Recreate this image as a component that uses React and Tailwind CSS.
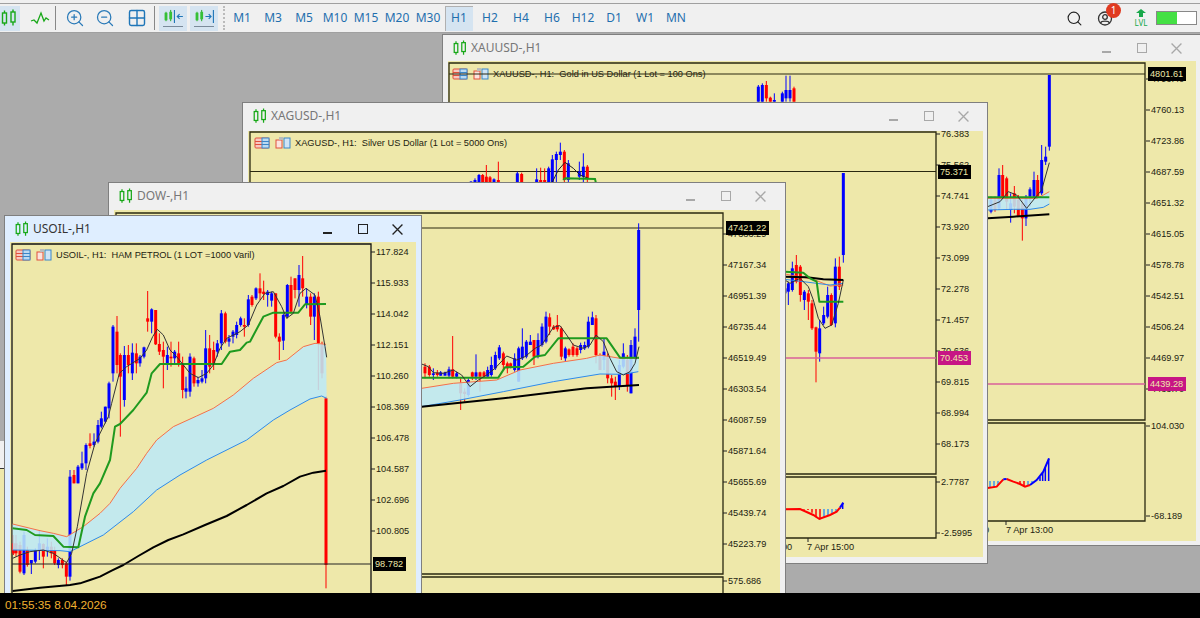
import { Search, ZoomIn, ZoomOut, Grid2x2 } from "lucide-react";

const BLUE = "#0000ff";
const RED = "#ff0000";

// candles are [x, colour, wickTop, bodyTop, bodyBottom, wickBottom], measured on a 3x crop
const usoilCandles = [
  [40,"r",975,1000,1030,1035],[48,"r",975,1000,1030,1040],[60,"r",995,1005,1085,1090],[72,"b",965,975,1090,1095],
  [82,"r",1010,1020,1065,1070],[94,"b",1050,1050,1060,1092],[106,"b",1015,1020,1055,1060],[118,"b",960,1000,1020,1050],
  [130,"r",1000,1002,1040,1075],[142,"b",985,1010,1020,1040],[154,"r",995,1010,1030,1045],[164,"r",1010,1020,1060,1065],
  [175,"b",1045,1050,1065,1075],[187,"r",1045,1050,1065,1075],[199,"r",1055,1060,1100,1125],[210,"b",780,800,1100,1112],
  [222,"r",780,795,820,820],[234,"b",765,770,820,820],[246,"b",725,760,775,780],[258,"b",700,705,760,780],
  [270,"r",670,700,708,715],[282,"b",670,695,705,710],[294,"b",630,645,695,700],[304,"b",605,625,650,655],
  [316,"b",590,590,635,640],[327,"b",515,520,595,625],[339,"b",345,350,490,515],[351,"r",318,365,465,490],
  [361,"r",430,435,500,680],[373,"b",408,435,570,590],[385,"r",405,435,465,490],[397,"b",400,428,490,510],
  [409,"r",400,430,460,490],[420,"b",435,440,460,470],[432,"b",410,412,440,445],[443,"r",243,325,335,365],
  [455,"b",295,298,335,370],[467,"r",300,300,403,405],[478,"r",370,402,425,435],[490,"r",395,420,440,535],
  [502,"b",410,435,462,480],[513,"r",395,440,445,470],[524,"b",420,425,445,460],[536,"r",395,430,460,470],
  [548,"r",440,460,540,565],[558,"b",500,535,545,565],[570,"b",430,440,545,560],[582,"r",440,445,520,530],
  [594,"b",500,510,520,530],[606,"b",480,505,515,520],[617,"b",360,415,505,520],[629,"r",375,415,470,490],
  [641,"r",395,420,460,480],[652,"b",390,400,425,440],[664,"b",300,310,400,420],[676,"r",305,310,395,400],
  [687,"b",375,385,395,410],[699,"b",360,365,380,400],[710,"b",335,345,375,385],[722,"b",320,325,345,350],
  [733,"r",325,345,350,380],[745,"b",255,268,345,350],[756,"r",255,260,285,290],[768,"b",232,235,265,270],
  [780,"r",190,235,250,270],[791,"r",212,245,252,270],[803,"b",240,245,255,290],[815,"b",245,250,272,290],
  [827,"r",250,250,380,385],[838,"r",370,380,395,450],[850,"b",310,315,392,420],[862,"b",222,225,320,325],
  [873,"r",200,225,305,310],[885,"r",205,205,240,265],[897,"b",165,195,240,290],[908,"r",138,205,235,260],
  [920,"b",235,260,285,295],[932,"r",250,260,320,345],[943,"b",250,260,320,390],[955,"r",245,260,400,540],
  [966,"r",395,405,490,505],[978,"r",560,565,1065,1135],
];

const usoilLines = {
  orange: [[38,942],[120,962],[160,970],[200,980],[250,950],[300,910],[330,880],[360,835],[410,775],[440,730],[470,690],[520,650],[590,618],[640,595],[700,555],[760,505],[830,458],[860,450],[910,410],[945,400],[978,403]],
  blue: [[38,1020],[180,1022],[210,1025],[310,975],[400,905],[470,840],[540,795],[620,750],[740,690],[820,630],[870,600],[930,567],[965,558],[980,565]],
  thick: [[38,1143],[120,1133],[210,1125],[240,1120],[270,1110],[300,1100],[335,1082],[370,1065],[415,1038],[460,1012],[505,990],[550,973],[615,945],[680,918],[740,885],[800,850],[850,828],[900,800],[940,788],[978,782]],
  green: [[38,955],[80,960],[105,975],[160,978],[190,1010],[235,1012],[255,920],[280,850],[300,820],[330,750],[345,650],[360,642],[400,600],[440,548],[455,490],[480,462],[665,462],[690,425],[720,420],[740,398],[750,395],[790,320],[820,308],[895,308],[915,283],[978,282]],
  thin: [[38,1045],[60,1035],[90,1025],[130,1020],[160,1030],[200,1058],[215,1030],[232,950],[260,790],[285,700],[325,620],[335,580],[358,490],[380,470],[420,445],[440,420],[458,380],[472,358],[490,375],[510,420],[530,440],[550,465],[570,490],[595,503],[620,490],[640,465],[660,415],[680,385],[720,365],[745,345],[770,285],[795,250],[820,245],[845,290],[860,325],[880,310],[900,250],[918,235],[945,255],[960,320],[975,410],[980,442]],
};

const dowCandles = [
  [15,"r",460,470,490,505],[28,"r",465,470,495,500],[40,"b",475,490,495,510],[52,"r",480,488,495,500],[62,"b",483,487,497,497],
  [75,"b",485,487,497,497],[87,"b",470,478,497,505],[98,"r",378,478,500,505],[110,"b",485,490,500,505],[122,"r",505,520,550,600],
  [134,"r",535,545,552,575],[145,"b",505,510,555,560],[157,"r",485,487,500,510],[168,"b",433,487,500,510],[180,"r",485,487,500,545],
  [192,"r",483,487,500,500],[203,"b",470,480,500,500],[214,"b",440,465,495,500],[226,"b",425,435,475,480],[238,"b",405,412,445,450],
  [250,"r",425,430,465,480],[262,"r",455,460,475,490],[272,"r",458,460,472,475],[284,"b",430,445,480,485],[296,"b",410,415,515,515],
  [307,"b",355,410,445,450],[319,"b",390,395,440,445],[331,"b",375,395,405,405],[342,"r",390,390,440,465],[354,"b",370,390,440,445],
  [366,"b",340,350,405,410],[378,"b",305,320,395,400],[389,"r",310,322,350,375],[401,"r",345,350,358,360],[412,"r",315,345,358,365],
  [424,"r",350,355,440,450],[436,"b",410,415,445,455],[447,"r",415,418,435,440],[459,"r",400,410,435,440],[471,"r",410,415,435,440],
  [482,"b",398,405,420,430],[494,"b",395,405,415,420],[505,"b",320,335,410,415],[517,"b",305,322,345,345],[528,"r",315,325,435,460],
  [540,"r",430,435,480,480],[552,"b",385,425,450,480],[563,"r",430,440,505,520],[575,"r",495,505,520,560],[586,"r",500,515,530,570],
  [598,"b",450,465,530,540],[610,"b",400,430,470,475],[622,"r",435,450,525,545],[633,"b",390,405,550,550],[645,"b",355,380,445,450],
  [656,"b",40,60,300,395],
];

const dowLines = {
  orange: [[5,535],[100,520],[230,510],[300,480],[400,460],[500,445],[540,435],[600,445],[657,445]],
  blue: [[5,590],[120,570],[250,545],[400,515],[540,492],[610,493],[655,485]],
  thick: [[5,590],[120,578],[250,565],[400,547],[500,535],[657,525]],
  green: [[5,503],[235,503],[255,472],[310,470],[345,440],[375,435],[415,385],[560,385],[600,443],[657,443]],
  thin: [[5,462],[25,470],[40,488],[70,490],[100,480],[125,495],[150,530],[175,510],[200,495],[225,475],[260,438],[290,450],[315,440],[345,415],[365,405],[385,375],[400,352],[420,347],[440,375],[460,405],[490,415],[510,405],[528,375],[550,395],[570,445],[590,485],[610,495],[630,485],[645,460],[657,410]],
};

const xagTopCandles = [
  [693,"b",243,245,260,260],[705,"b",235,240,260,260],[717,"b",222,225,260,260],[728,"r",222,225,260,260],[739,"r",195,230,260,260],
  [750,"r",228,232,260,260],[762,"b",235,238,260,260],[775,"r",185,240,260,260],[832,"b",215,220,260,260],[845,"r",218,222,260,260],
  [890,"b",205,238,260,260],[902,"r",203,240,260,260],[914,"r",205,240,260,260],[926,"b",200,205,260,260],[937,"b",165,178,260,260],
  [949,"b",155,162,180,260],[961,"b",128,155,165,180],[973,"r",150,155,240,260],[985,"b",180,190,240,260],[1018,"b",185,215,230,240],
  [1030,"b",160,200,230,260],[1042,"r",195,200,235,260],
];

const xagCandles = [
  [15,"b",65,115,130,135],[25,"b",95,100,125,165],[37,"b",35,55,120,125],[49,"r",15,45,95,100],[61,"r",45,50,135,155],
  [73,"b",120,125,150,180],[85,"r",120,130,155,210],[96,"r",150,160,235,240],[108,"r",230,232,305,397],[119,"b",210,235,310,335],
  [131,"b",170,195,220,225],[143,"b",110,135,200,205],[154,"r",130,135,225,228],[166,"b",25,50,220,232],[178,"r",20,50,110,120],
  [190,"b",-231,-231,15,38],
];

const xagLines = {
  orange: [[15,72],[100,88],[150,108],[190,105]],
  blue: [[15,88],[110,100],[150,105],[190,100]],
  thick: [[15,80],[80,82],[130,88],[190,90]],
  green: [[15,65],[70,68],[90,85],[110,95],[118,155],[190,155]],
  thin: [[15,90],[30,100],[60,85],[85,110],[100,150],[115,205],[135,235],[155,225],[175,160],[190,90]],
};

const xauTopCandles = [
  [955,"b",150,155,200,200],[967,"b",145,150,200,200],[979,"r",138,150,190,200],[991,"r",185,188,200,200],[1003,"b",175,195,200,200],
  [1027,"b",170,175,200,200],[1038,"b",122,165,190,200],[1050,"b",122,165,190,200],[1062,"r",155,160,200,200],
];

const xauCandles = [
  [633,"b",290,300,335,340],[645,"r",290,300,330,335],[657,"b",205,225,325,330],[668,"r",195,225,295,300],[680,"r",230,235,305,330],
  [692,"b",280,310,330,368],[703,"r",258,280,320,340],[715,"r",285,300,350,350],[727,"r",300,310,355,422],[738,"b",285,295,355,378],
  [750,"b",262,268,290,320],[762,"b",215,240,290,295],[773,"r",225,240,290,295],[785,"b",135,180,280,285],[797,"b",140,170,185,195],
  [808,"b",-75,-75,140,152],
];

const xauLines = {
  orange: [[623,295],[770,295],[790,285],[808,275]],
  blue: [[623,330],[700,328],[750,328],[790,322],[808,312]],
  thick: [[623,355],[700,350],[808,343]],
  green: [[623,292],[808,292]],
  thin: [[623,320],[660,305],[685,275],[710,285],[740,325],[760,300],[785,270],[808,188]],
};

const xagHist = [[72,299,"r"],[84,300,"r"],[96,308,"r"],[108,322,"r"],[120,328,"r"],[132,322,"b"],[144,318,"b"],[156,314,"b"],[168,306,"b"],[180,294,"d"],[188,280,"d"]];
const xauHist = [[630,232,"b"],[642,231,"b"],[654,226,"b"],[720,222,"r"],[732,230,"r"],[744,228,"b"],[756,220,"b"],[768,212,"b"],[780,200,"d"],[788,188,"d"],[796,172,"d"],[806,146,"d"]];

const pts = (list, ox, oy) => list.map(([x, y]) => `${ox + x / 3},${oy + y / 3}`).join(" ");

const Candles = ({ data, ox, oy }) => (
  <g>
    {data.map(([x, c, wt, bt, bb, wb]) => {
      const px = ox + x / 3;
      const color = c === "b" ? BLUE : RED;
      return (
        <g key={x}>
          <line x1={px} x2={px} y1={oy + wt / 3} y2={oy + wb / 3} stroke={color} strokeWidth="1" />
          <rect x={px - 1.5} y={oy + bt / 3} width="3" height={Math.max((bb - bt) / 3, 1)} fill={color} />
        </g>
      );
    })}
  </g>
);

const Lines = ({ lines, ox, oy, fillBand = true }) => (
  <g fill="none" strokeLinejoin="round">
    {fillBand && (
      <polygon points={`${pts(lines.orange, ox, oy)} ${pts([...lines.blue].reverse(), ox, oy)}`} fill="#bde8f6" fillOpacity="0.88" />
    )}
    <polyline points={pts(lines.orange, ox, oy)} stroke="#f5704a" strokeWidth="1" />
    <polyline points={pts(lines.blue, ox, oy)} stroke="#2e8bea" strokeWidth="1" />
    <polyline points={pts(lines.thick, ox, oy)} stroke="#000" strokeWidth="2" />
    <polyline points={pts(lines.green, ox, oy)} stroke="#1f9a1f" strokeWidth="2" />
    <polyline points={pts(lines.thin, ox, oy)} stroke="#333" strokeWidth="1" />
  </g>
);

const Hist = ({ data, ox, oy, base, curve }) => (
  <g>
    {data.map(([x, y, c]) => (
      <line
        key={x}
        x1={ox + x / 3}
        x2={ox + x / 3}
        y1={oy + base / 3}
        y2={oy + y / 3}
        stroke={c === "r" ? RED : c === "b" ? "#3a96f0" : BLUE}
        strokeWidth="1.5"
      />
    ))}
    {curve.map(([color, list], i) => (
      <polyline key={i} points={pts(list, ox, oy)} fill="none" stroke={color} strokeWidth="2" />
    ))}
  </g>
);

const Axis = ({ x, labels, tick = 4 }) => (
  <g>
    {labels.map(([text, y]) => (
      <g key={text}>
        <line x1={x} x2={x + tick} y1={y} y2={y} stroke="#222" />
        <text x={x + 5} y={y + 3} className="fill-[#1c1c10] text-[9.2px]">{text}</text>
      </g>
    ))}
  </g>
);

const PriceTag = ({ x, y, w, text, pink }) => (
  <g>
    <rect x={x} y={y - 7} width={w} height="14" fill={pink ? "#c71585" : "#000"} />
    <text x={x + 2} y={y + 3} className="fill-[#eee8aa] text-[9.2px]">{text}</text>
  </g>
);

const LegendIcons = ({ x, y }) => (
  <g fill="none">
    <rect x={x} y={y} width="14" height="10" rx="1" fill="#f7c8c0" stroke="#e0503c" />
    <path d={`M${x} ${y + 3.5}h14M${x} ${y + 6.5}h14`} stroke="#e0503c" />
    <rect x={x + 7} y={y} width="7" height="10" fill="#bcd9f2" stroke="#3a86c8" />
    <path d={`M${x + 7} ${y + 3.5}h7M${x + 7} ${y + 6.5}h7`} stroke="#3a86c8" />
    <rect x={x + 21} y={y + 2} width="6" height="8" fill="#fbe3de" stroke="#e0503c" />
    <rect x={x + 29} y={y} width="6" height="10" fill="#cfe4f6" stroke="#3a86c8" />
    <rect x={x + 24} y={y - 1} width="4" height="3" fill="#bbb" />
  </g>
);

const CandleIcon = ({ className = "w-[18px] h-[18px]" }) => (
  <svg viewBox="0 0 18 18" className={className} fill="none" stroke="#18a818" strokeWidth="1.4">
    <rect x="2.5" y="4" width="4" height="10" />
    <path d="M4.5 1.5V4M4.5 14v2.5" />
    <rect x="11" y="3" width="4" height="10" />
    <path d="M13 .5V3M13 13v3.5" />
  </svg>
);

const Legend = ({ x, y, text }) => (
  <g>
    <LegendIcons x={x} y={y - 5} />
    <text x={x + 40} y={y + 3} className="fill-[#1c1c10] text-[9.25px]">{text}</text>
  </g>
);

const Window = ({ className, title, active, right, children }) => (
  <div className={`absolute flex flex-col border border-[#7f7f7f] ${active ? "bg-[#dfeeff]" : "bg-[#f0f0f0]"} ${className}`}>
    <div className={`flex h-[26px] shrink-0 items-center pl-[9px] ${right}`}>
      <CandleIcon className="w-[16px] h-[16px]" />
      <span className={`ml-[3px] text-[12px] font-['Noto_Sans',sans-serif] ${active ? "text-[#333]" : "text-[#777]"}`}>{title}</span>
      <div className={`ml-auto flex items-center ${active ? "text-[#222]" : "text-[#a8a8a8]"}`}>
        <div className="flex w-[35px] justify-center">
          <span className="mt-[8px] h-[1.5px] w-[9px] bg-current" />
        </div>
        <div className="flex w-[35px] justify-center">
          <span className="h-[10px] w-[10px] border-[1.5px] border-current" />
        </div>
        <div className="flex w-[35px] justify-center">
          <svg viewBox="0 0 10 10" className="h-[11px] w-[11px]" stroke="currentColor" strokeWidth="1.2">
            <path d="M.5.5l9 9M9.5.5l-9 9" />
          </svg>
        </div>
      </div>
    </div>
    {children}
  </div>
);

// the svg's viewBox is in page pixels, so everything in a chart is drawn where it sits on screen
const Client = ({ className, ox, oy, w, h, children }) => (
  <div className={`relative mx-[5px] bg-[#eee8aa] ${className}`}>
    <svg width={w} height={h} viewBox={`${ox} ${oy} ${w} ${h}`} className="block overflow-visible">
      {children}
    </svg>
  </div>
);

const TF = ["M1", "M3", "M5", "M10", "M15", "M20", "M30", "H1", "H2", "H4", "H6", "H12", "D1", "W1", "MN"];

const ScrollIcon = ({ flip }) => (
  <>
    <svg viewBox="0 0 22 16" className="h-[15px] w-[21px]" fill="none">
      <path d="M3 3v10M8 1v12" stroke="#18a818" strokeWidth="1" />
      <rect x="1.5" y="4" width="3" height="8" fill="#36c036" />
      <rect x="6.5" y="3" width="3" height="8" fill="#36c036" />
      {flip ? (
        <>
          <path d="M12 8h6M15.5 5.5L18 8l-2.5 2.5" stroke="#1f76b8" strokeWidth="1.2" />
          <path d="M20.5 1v14" stroke="#1f76b8" strokeWidth="1.2" />
        </>
      ) : (
        <>
          <path d="M12 1v14" stroke="#1f76b8" strokeWidth="1.2" />
          <path d="M15 8h6M17.5 5.5L15 8l2.5 2.5" stroke="#1f76b8" strokeWidth="1.2" />
        </>
      )}
    </svg>
    <span className="mt-[2px] h-px w-[20px] bg-[#7a8a9a]" />
  </>
);

const Toolbar = () => (
  <div className="mt-[3px] flex h-[30px] items-center border-y border-y-[#a0a0a0] bg-[#f0f0f0] pr-[3px]">
    <div className="flex h-[25px] w-[20px] items-center justify-center overflow-hidden bg-[#d5e4f1]">
      <CandleIcon className="h-[18px] w-[18px] shrink-0 -translate-x-[1px]" />
    </div>
    <div className="flex w-[35px] justify-center pl-[5px]">
      <svg viewBox="0 0 20 14" className="h-[14px] w-[20px]" fill="none" stroke="#18a818" strokeWidth="1.3">
        <path d="M1 10l3-1 3 3 4-10 3 8 2-3 3 2" />
      </svg>
    </div>
    <span className="h-[24px] w-px bg-[#888]" />
    <div className="flex w-[38px] justify-center text-[#2a7ab8]"><ZoomIn size={20} strokeWidth={1.5} /></div>
    <div className="flex w-[22px] justify-center text-[#2a7ab8]"><ZoomOut size={20} strokeWidth={1.5} /></div>
    <div className="ml-[4px] flex w-[34px] justify-center text-[#1f76b8]"><Grid2x2 size={20} strokeWidth={1.7} /></div>
    <span className="h-[24px] w-px bg-[#888]" />
    <div className="ml-[4px] flex h-[25px] w-[28px] flex-col items-center justify-center bg-[#d5e4f1]">
      <ScrollIcon flip={false} />
    </div>
    <div className="ml-[3px] flex h-[25px] w-[28px] flex-col items-center justify-center bg-[#d5e4f1]">
      <ScrollIcon flip />
    </div>
    <span className="ml-[5px] h-[24px] border-l-2 border-dotted border-[#bbb]" />
    <div className="ml-[3px] flex gap-[3px]">
      {TF.map((t) => (
        <div
          key={t}
          className={`flex h-[25px] w-[28px] items-center justify-center text-[12px] font-['Noto_Sans',sans-serif] text-[#1f6fae] ${t === "H1" ? "bg-[#d5e4f1] shadow-[inset_1px_1px_0_#b0b0b0]" : ""}`}
        >
          {t}
        </div>
      ))}
    </div>
    <div className="ml-auto flex items-center">
      <Search size={17} strokeWidth={1.6} className="text-[#222]" />
      <div className="relative ml-[14px] h-[18px] w-[18px]">
        <svg viewBox="0 0 18 18" className="h-[18px] w-[18px]" fill="none" stroke="#333" strokeWidth="1.3">
          <circle cx="8" cy="9.5" r="6.5" />
          <circle cx="8" cy="8" r="2.3" />
          <path d="M3.5 14c1-2.4 8-2.4 9 0" />
        </svg>
        <span className="absolute -right-[6px] -top-[6px] flex h-[15px] w-[15px] items-center justify-center rounded-full bg-[#e03a20] text-[10px] text-white font-['Noto_Sans',sans-serif]">1</span>
      </div>
      <div className="ml-[18px] flex w-[16px] flex-col items-center leading-none">
        <svg viewBox="0 0 10 8" className="h-[8px] w-[10px]" fill="#18a84a"><path d="M5 0l5 4H7v4H3V4H0z" /></svg>
        <span className="mt-[2px] text-[8px] font-['Noto_Sans',sans-serif] text-[#18a84a]">LVL</span>
      </div>
      <div className="ml-[7px] flex h-[14px] w-[41px] border border-[#888] bg-white">
        <span className="w-[20px] bg-[#44e044]" />
      </div>
    </div>
  </div>
);

const XauWindow = () => (
  <Window className="left-[442px] top-[34px] h-[512px] w-[760px]" title="XAUUSD-,H1" right="pr-[7px]">
    <Client className="h-[480px] w-[748px]" ox={448} oy={61} w={748} h={480}>
      <path d="M449 63H1145V420H449Z" fill="none" stroke="#2a2810" strokeWidth="1.3" />
      <path d="M449 423H1145V521H449Z" fill="none" stroke="#2a2810" strokeWidth="1.3" />
      <Legend x={453} y={74} text={"XAUUSD-, H1:\u00a0\u00a0Gold in US Dollar (1 Lot = 100 Ons)"} />
      <line x1="449" x2="1145" y1="74" y2="74" stroke="#2a2810" strokeWidth="1.2" />
      <Candles data={xauTopCandles} ox={440} oy={35} />
      <Candles data={xauCandles} ox={780} oy={100} />
      <Lines lines={xauLines} ox={780} oy={100} />
      <line x1="449" x2="1145" y1="384" y2="384" stroke="#d9609a" strokeWidth="1.5" />
      <Axis
        x={1146}
        labels={[["4796.40",79],["4760.13",110],["4723.86",141],["4687.59",172],["4651.32",203],["4615.05",234],["4578.78",265],["4542.51",296],["4506.24",327],["4469.97",358],["4433.70",389],["104.030",426],["-68.189",516]]}
      />
      <PriceTag x={1148} y={74} w={38} text="4801.61" />
      <PriceTag x={1148} y={384} w={38} text="4439.28" pink />
      <Hist
        data={xauHist}
        ox={780}
        oy={410}
        base={213}
        curve={[["#ff0000",[[623,234],[650,230],[670,208]]],[BLUE,[[670,208],[680,207]]],["#ff0000",[[680,207],[700,215],[720,222],[735,230],[750,225]]],[BLUE,[[750,225],[770,210],[790,185],[807,145]]]]}
      />
      <line x1="1006" x2="1006" y1="521" y2="525" stroke="#222" />
      <text x="984" y="533" className="fill-[#1c1c10] text-[9.2px]">0</text>
      <text x="1006" y="533" className="fill-[#1c1c10] text-[9.2px]">7 Apr 13:00</text>
    </Client>
  </Window>
);

const XagWindow = () => (
  <Window className="left-[242px] top-[102px] h-[462px] w-[746px]" title="XAGUSD-,H1" right="pr-[6px]">
    <Client className="mt-[2px] h-[426px] w-[735px]" ox={248} oy={131} w={735} h={426}>
      <path d="M250 132H936V474H250Z" fill="none" stroke="#2a2810" strokeWidth="1.3" />
      <path d="M250 477H936V538H250Z" fill="none" stroke="#2a2810" strokeWidth="1.3" />
      <Legend x={255} y={143} text={"XAGUSD-, H1:\u00a0\u00a0Silver US Dollar (1 Lot = 5000 Ons)"} />
      <line x1="250" x2="936" y1="171.5" y2="171.5" stroke="#2a2810" strokeWidth="1.2" />
      <Candles data={xagTopCandles} ox={240} oy={100} />
      <g>
        <polyline points={pts([[935,250],[955,210],[975,187],[1000,205],[1020,225],[1045,235]], 240, 100)} fill="none" stroke="#222" />
        <polyline points={pts([[970,240],[975,235],[1065,237],[1068,250]], 240, 100)} fill="none" stroke="#1f9a1f" strokeWidth="2" />
      </g>
      <Candles data={xagCandles} ox={780} oy={250} />
      <Lines lines={xagLines} ox={780} oy={250} fillBand={false} />
      <line x1="250" x2="936" y1="358" y2="358" stroke="#d9609a" strokeWidth="1.5" />
      <Axis
        x={936}
        labels={[["76.383",134],["75.562",165],["74.741",196],["73.920",227],["73.099",258],["72.278",289],["71.457",320],["70.636",351],["69.815",382],["68.994",413],["68.173",444],["2.7787",482],["-2.5995",533]]}
      />
      <PriceTag x={938} y={172} w={33} text="75.371" />
      <PriceTag x={938} y={358} w={33} text="70.453" pink />
      <Hist
        data={xagHist}
        ox={780}
        oy={410}
        base={297}
        curve={[["#ff0000",[[12,298],[60,297],[100,315],[118,327],[150,315],[170,305],[180,293]]],[BLUE,[[180,293],[190,278]]]]}
      />
      <line x1="808" x2="808" y1="538" y2="542" stroke="#222" />
      <text x="782" y="550" className="fill-[#1c1c10] text-[9.2px]">00</text>
      <text x="807" y="550" className="fill-[#1c1c10] text-[9.2px]">7 Apr 15:00</text>
    </Client>
  </Window>
);

const DowWindow = () => (
  <Window className="left-[108px] top-[182px] h-[420px] w-[678px]" title="DOW-,H1" right="pr-[7px]">
    <Client className="mt-[1px] h-[391px] w-[666px]" ox={114} oy={210} w={666} h={391}>
      <path d="M116 213H723V574H116Z" fill="none" stroke="#2a2810" strokeWidth="1.3" />
      <path d="M116 577H723V600H116Z" fill="none" stroke="#2a2810" strokeWidth="1.3" />
      <line x1="116" x2="723" y1="228" y2="228" stroke="#2a2810" strokeWidth="1.2" />
      <Candles data={dowCandles} ox={420} oy={210} />
      <Lines lines={dowLines} ox={420} oy={210} />
      <Axis
        x={723}
        labels={[["47383.29",234],["47167.34",265],["46951.39",296],["46735.44",327],["46519.49",358],["46303.54",389],["46087.59",420],["45871.64",451],["45655.69",482],["45439.74",513],["45223.79",544],["575.686",581]]}
      />
      <PriceTag x={726} y={228} w={43} text="47421.22" />
    </Client>
  </Window>
);

const UsoilWindow = () => (
  <Window className="left-[4px] top-[215px] h-[390px] w-[418px]" title="USOIL-,H1" active right="pr-[6px]">
    <Client className="h-[362px] w-[406px]" ox={10} oy={242} w={406} h={362}>
      <path d="M12 244H371V600H12Z" fill="none" stroke="#111" strokeWidth="1.3" />
      <Legend x={16} y={255} text={"USOIL-, H1:\u00a0\u00a0HAM PETROL (1 LOT =1000 Varil)"} />
      <Candles data={usoilCandles} ox={0} oy={210} />
      <Lines lines={usoilLines} ox={0} oy={210} />
      <line x1="12" x2="371" y1="564" y2="564" stroke="#222" />
      <Axis
        x={371}
        labels={[["117.824",252],["115.933",283],["114.042",314],["112.151",345],["110.260",376],["108.369",407],["106.478",438],["104.587",469],["102.696",500],["100.805",531]]}
      />
      <PriceTag x={373} y={564} w={33} text="98.782" />
    </Client>
  </Window>
);

export default function App() {
  return (
    <div className="relative h-[618px] w-[1200px] overflow-hidden bg-[#ababab] font-['Liberation_Sans',sans-serif]">
      <div className="absolute inset-x-0 top-0 z-20 bg-[#f0f0f0]">
        <Toolbar />
      </div>
      {/* edge of one more chart window, mostly behind USOIL */}
      <div className="absolute left-0 top-[441px] h-[160px] w-[4px] bg-[#f0f0f0]">
        <div className="mt-[27px] h-full border-t border-t-[#333] bg-[#eee8aa]" />
      </div>
      <XauWindow />
      <XagWindow />
      <DowWindow />
      <UsoilWindow />
      <div className="absolute inset-x-0 bottom-0 z-20 flex h-[25px] items-center bg-black pl-[5px] text-[11.8px] text-[#f0b030]">
        01:55:35 8.04.2026
      </div>
    </div>
  );
}
